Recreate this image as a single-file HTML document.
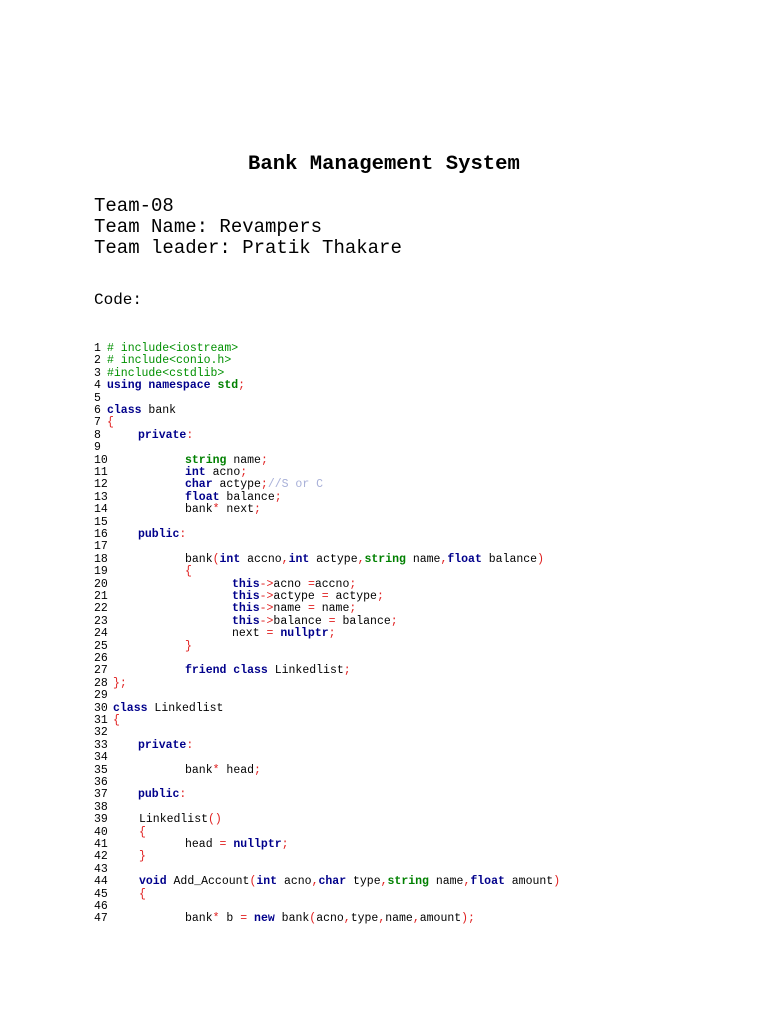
<!DOCTYPE html>
<html><head><meta charset="utf-8"><style>
body{margin:0;background:#fff;width:768px;height:1024px;position:relative;overflow:hidden;font-family:"Liberation Mono",monospace;color:#000}
.t{position:absolute;white-space:pre}
.l{position:absolute;left:94px;font-size:11.5px;line-height:12.4px;white-space:pre;color:#000}
.c{position:absolute;white-space:pre}
.k{color:#00008b;font-weight:bold}
.g{color:#008000;font-weight:bold}
.p{color:#009000}
.r{color:#e02020}
.m{color:#a8b0d8}
#code{position:absolute;left:0;top:2px;width:768px;height:1024px}
</style></head><body>
<div class="t" style="left:248px;top:153px;font-size:20.6px;font-weight:bold;line-height:24px">Bank Management System</div>
<div class="t" style="left:94px;top:196px;font-size:19px;line-height:21px">Team-08
Team Name: Revampers
Team leader: Pratik Thakare</div>
<div class="t" style="left:94px;top:290px;font-size:16px;line-height:20px">Code:</div>
<div id="code">
<div class="l" style="top:341px">1<span class="c" style="left:13px"><span class="p"># include&lt;iostream&gt;</span></span></div>
<div class="l" style="top:353.4px">2<span class="c" style="left:13px"><span class="p"># include&lt;conio.h&gt;</span></span></div>
<div class="l" style="top:365.8px">3<span class="c" style="left:13px"><span class="p">#include&lt;cstdlib&gt;</span></span></div>
<div class="l" style="top:378.2px">4<span class="c" style="left:13px"><span class="k">using namespace</span> <span class="g">std</span><span class="r">;</span></span></div>
<div class="l" style="top:390.6px">5</div>
<div class="l" style="top:403px">6<span class="c" style="left:13px"><span class="k">class</span> bank</span></div>
<div class="l" style="top:415.4px">7<span class="c" style="left:13px"><span class="r">{</span></span></div>
<div class="l" style="top:427.8px">8<span class="c" style="left:44px"><span class="k">private</span><span class="r">:</span></span></div>
<div class="l" style="top:440.2px">9</div>
<div class="l" style="top:452.6px">10<span class="c" style="left:91px"><span class="g">string</span> name<span class="r">;</span></span></div>
<div class="l" style="top:465px">11<span class="c" style="left:91px"><span class="k">int</span> acno<span class="r">;</span></span></div>
<div class="l" style="top:477.4px">12<span class="c" style="left:91px"><span class="k">char</span> actype<span class="r">;</span><span class="m">//S or C</span></span></div>
<div class="l" style="top:489.8px">13<span class="c" style="left:91px"><span class="k">float</span> balance<span class="r">;</span></span></div>
<div class="l" style="top:502.2px">14<span class="c" style="left:91px">bank<span class="r">*</span> next<span class="r">;</span></span></div>
<div class="l" style="top:514.6px">15</div>
<div class="l" style="top:527px">16<span class="c" style="left:44px"><span class="k">public</span><span class="r">:</span></span></div>
<div class="l" style="top:539.4px">17</div>
<div class="l" style="top:551.8px">18<span class="c" style="left:91px">bank<span class="r">(</span><span class="k">int</span> accno<span class="r">,</span><span class="k">int</span> actype<span class="r">,</span><span class="g">string</span> name<span class="r">,</span><span class="k">float</span> balance<span class="r">)</span></span></div>
<div class="l" style="top:564.2px">19<span class="c" style="left:91px"><span class="r">{</span></span></div>
<div class="l" style="top:576.6px">20<span class="c" style="left:138px"><span class="k">this</span><span class="r">-&gt;</span>acno <span class="r">=</span>accno<span class="r">;</span></span></div>
<div class="l" style="top:589px">21<span class="c" style="left:138px"><span class="k">this</span><span class="r">-&gt;</span>actype <span class="r">=</span> actype<span class="r">;</span></span></div>
<div class="l" style="top:601.4px">22<span class="c" style="left:138px"><span class="k">this</span><span class="r">-&gt;</span>name <span class="r">=</span> name<span class="r">;</span></span></div>
<div class="l" style="top:613.8px">23<span class="c" style="left:138px"><span class="k">this</span><span class="r">-&gt;</span>balance <span class="r">=</span> balance<span class="r">;</span></span></div>
<div class="l" style="top:626.2px">24<span class="c" style="left:138px">next <span class="r">=</span> <span class="k">nullptr</span><span class="r">;</span></span></div>
<div class="l" style="top:638.6px">25<span class="c" style="left:91px"><span class="r">}</span></span></div>
<div class="l" style="top:651px">26</div>
<div class="l" style="top:663.4px">27<span class="c" style="left:91px"><span class="k">friend class</span> Linkedlist<span class="r">;</span></span></div>
<div class="l" style="top:675.8px">28<span class="c" style="left:19px"><span class="r">};</span></span></div>
<div class="l" style="top:688.2px">29</div>
<div class="l" style="top:700.6px">30<span class="c" style="left:19px"><span class="k">class</span> Linkedlist</span></div>
<div class="l" style="top:713px">31<span class="c" style="left:19px"><span class="r">{</span></span></div>
<div class="l" style="top:725.4px">32</div>
<div class="l" style="top:737.8px">33<span class="c" style="left:44px"><span class="k">private</span><span class="r">:</span></span></div>
<div class="l" style="top:750.2px">34</div>
<div class="l" style="top:762.6px">35<span class="c" style="left:91px">bank<span class="r">*</span> head<span class="r">;</span></span></div>
<div class="l" style="top:775px">36</div>
<div class="l" style="top:787.4px">37<span class="c" style="left:44px"><span class="k">public</span><span class="r">:</span></span></div>
<div class="l" style="top:799.8px">38</div>
<div class="l" style="top:812.2px">39<span class="c" style="left:45px">Linkedlist<span class="r">()</span></span></div>
<div class="l" style="top:824.6px">40<span class="c" style="left:45px"><span class="r">{</span></span></div>
<div class="l" style="top:837px">41<span class="c" style="left:91px">head <span class="r">=</span> <span class="k">nullptr</span><span class="r">;</span></span></div>
<div class="l" style="top:849.4px">42<span class="c" style="left:45px"><span class="r">}</span></span></div>
<div class="l" style="top:861.8px">43</div>
<div class="l" style="top:874.2px">44<span class="c" style="left:45px"><span class="k">void</span> Add_Account<span class="r">(</span><span class="k">int</span> acno<span class="r">,</span><span class="k">char</span> type<span class="r">,</span><span class="g">string</span> name<span class="r">,</span><span class="k">float</span> amount<span class="r">)</span></span></div>
<div class="l" style="top:886.6px">45<span class="c" style="left:45px"><span class="r">{</span></span></div>
<div class="l" style="top:899px">46</div>
<div class="l" style="top:911.4px">47<span class="c" style="left:91px">bank<span class="r">*</span> b <span class="r">=</span> <span class="k">new</span> bank<span class="r">(</span>acno<span class="r">,</span>type<span class="r">,</span>name<span class="r">,</span>amount<span class="r">);</span></span></div>
</div>
</body></html>
